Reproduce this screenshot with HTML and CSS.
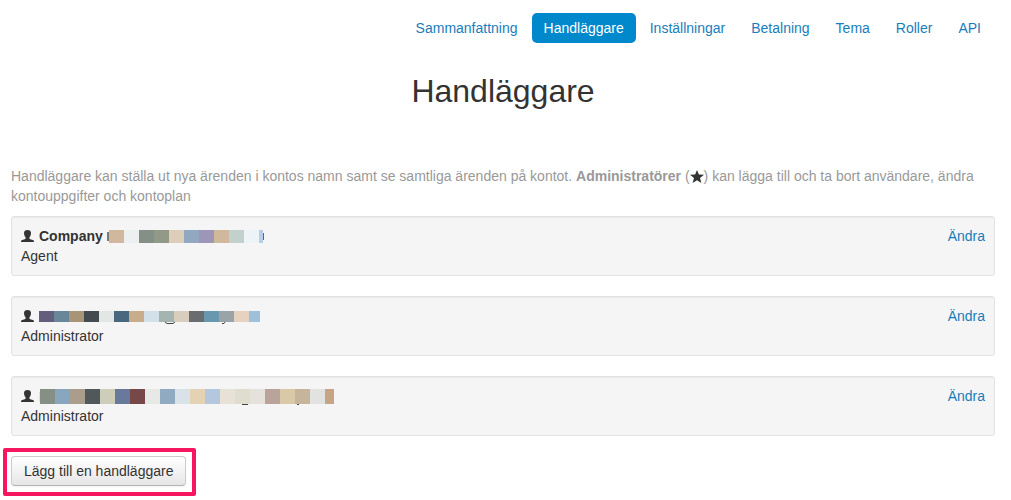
FILE: index.html
```html
<!DOCTYPE html>
<html lang="sv">

<head>
    <meta charset="UTF-8">
    <meta name="viewport" content="width=device-width, initial-scale=1.0">
    <title>Handläggare</title>
    <link rel="stylesheet" href="styles.css">
</head>

<body>
    <svg class="sprite" aria-hidden="true">
        <symbol id="icon-user" viewBox="0 0 13 12">
            <path d="M6.500 0C4.300 0 3 1.100 3 3c0 1.800.7 3.300 1.600 4.200v1c0 .5-.3.800-.8 1L1.200 10.100C.4 10.400 0 10.800 0 12h13c0-1.200-.4-1.600-1.200-1.900L9.200 9.200c-.5-.2-.8-.5-.8-1v-1C9.300 6.300 10 4.800 10 3 10 1.100 8.700 0 6.500 0z"/>
        </symbol>
    </svg>

    <nav>
        <ul class="nav-pills">
            <li><a href="#">Sammanfattning</a></li>
            <li class="active"><a href="#" aria-current="page">Handläggare</a></li>
            <li><a href="#">Inställningar</a></li>
            <li><a href="#">Betalning</a></li>
            <li><a href="#">Tema</a></li>
            <li><a href="#">Roller</a></li>
            <li><a href="#">API</a></li>
        </ul>
    </nav>

    <h1>Handläggare</h1>

    <p class="muted">Handläggare kan ställa ut nya ärenden i kontos namn samt se samtliga ärenden på kontot.
        <strong>Administratörer</strong> (<svg class="icon-star" viewBox="0 0 14 13" role="img" aria-label="stjärna"><path d="M7 0l1.900 4.600 5.100.2-4 3.300L11.400 13 7 10.300 2.600 13 4 8.100 0 4.800l5.100-.2z"/></svg>) kan lägga till och ta bort användare, ändra kontouppgifter och kontoplan</p>

    <div class="well">
        <div class="agent">
            <div class="name">
                <svg class="icon-user" aria-hidden="true"><use href="#icon-user"/></svg>
                <strong>Company</strong>
                <svg class="mask" width="157" height="13" aria-hidden="true">
                    <path fill="#777b80" d="M0 2h2v9H0z"/>
                    <path fill="#d0b89c" d="M2 0h15v13H2z"/>
                    <path fill="#ecf0f1" d="M17 0h15v13H17z"/>
                    <path fill="#848f85" d="M32 0h15v13H32z"/>
                    <path fill="#929986" d="M47 0h15v13H47z"/>
                    <path fill="#ddcdbb" d="M62 0h15v13H62z"/>
                    <path fill="#90a9c1" d="M77 0h15v13H77z"/>
                    <path fill="#9e96b7" d="M92 0h15v13H92z"/>
                    <path fill="#d0b89c" d="M107 0h15v13h-15z"/>
                    <path fill="#c3d1cd" d="M122 0h15v13h-15z"/>
                    <path fill="#eef3f7" d="M137 0h15v13h-15z"/>
                    <path fill="#b6cfe7" d="M152 0h4v13h-4z"/>
                    <path fill="#3472a5" d="M156 3h1v7h-1z"/>
                </svg>
            </div>
            <div>Agent</div>
        </div>
        <a href="#">Ändra</a>
    </div>

    <div class="well">
        <div class="agent">
            <div class="name">
                <svg class="icon-user" aria-hidden="true"><use href="#icon-user"/></svg>
                <svg class="mask" width="221" height="11" aria-hidden="true">
                    <path fill="#635e7e" d="M0 0h15v11H0z"/>
                    <path fill="#6a8799" d="M15 0h15v11H15z"/>
                    <path fill="#a89576" d="M30 0h15v11H30z"/>
                    <path fill="#434b51" d="M45 0h15v11H45z"/>
                    <path fill="#e2e6e5" d="M60 0h15v11H60z"/>
                    <path fill="#4a6780" d="M75 0h15v11H75z"/>
                    <path fill="#c8ac8b" d="M90 0h15v11H90z"/>
                    <path fill="#d2e1e9" d="M105 0h15v11h-15z"/>
                    <path fill="#a3b4b1" d="M120 0h15v11h-15z"/>
                    <path fill="#d9cdbd" d="M135 0h15v11h-15z"/>
                    <path fill="#696d6f" d="M150 0h15v11h-15z"/>
                    <path fill="#6898af" d="M165 0h15v11h-15z"/>
                    <path fill="#9aa3a7" d="M180 0h15v11h-15z"/>
                    <path fill="#e5d3c0" d="M195 0h15v11h-15z"/>
                    <path fill="#9fc0db" d="M210 0h11v11h-11z"/>
                    <path fill="none" stroke="#444" d="M126 11l2 1.500h6l2-1.500M183 12.500h2l1-1.500"/>
                </svg>
            </div>
            <div>Administrator</div>
        </div>
        <a href="#">Ändra</a>
    </div>

    <div class="well">
        <div class="agent">
            <div class="name">
                <svg class="icon-user" aria-hidden="true"><use href="#icon-user"/></svg>
                <svg class="mask" width="295" height="15" aria-hidden="true">
                    <path fill="#f0dfb5" d="M0 3h1v10H0z"/>
                    <path fill="#858f85" d="M1 0h15v15H1z"/>
                    <path fill="#88a7bf" d="M16 0h15v15H16z"/>
                    <path fill="#aa9d8c" d="M31 0h15v15H31z"/>
                    <path fill="#50585b" d="M46 0h15v15H46z"/>
                    <path fill="#cdcdb9" d="M61 0h15v15H61z"/>
                    <path fill="#69799c" d="M76 0h15v15H76z"/>
                    <path fill="#774848" d="M91 0h15v15H91z"/>
                    <path fill="#e6e9e6" d="M106 0h15v15h-15z"/>
                    <path fill="#90abc1" d="M121 0h15v15h-15z"/>
                    <path fill="#d9e2e9" d="M136 0h15v15h-15z"/>
                    <path fill="#e4d3b3" d="M151 0h15v15h-15z"/>
                    <path fill="#b3c8df" d="M166 0h15v15h-15z"/>
                    <path fill="#e8e1d8" d="M181 0h15v15h-15z"/>
                    <path fill="#dfddcf" d="M196 0h15v15h-15z"/>
                    <path fill="#e5e2dc" d="M211 0h15v15h-15z"/>
                    <path fill="#b9a39a" d="M226 0h15v15h-15z"/>
                    <path fill="#d9c9a6" d="M241 0h15v15h-15z"/>
                    <path fill="#c7b59b" d="M256 0h15v15h-15z"/>
                    <path fill="#e2e2e1" d="M271 0h15v15h-15z"/>
                    <path fill="#c6a586" d="M286 0h9v15h-9z"/>
                    <path fill="#444" d="M203 15h6v1h-6zM258 15h2v1h-2z"/>
                </svg>
            </div>
            <div>Administrator</div>
        </div>
        <a href="#">Ändra</a>
    </div>

    <div class="highlight">
        <button type="button" class="btn">Lägg till en handläggare</button>
    </div>
</body>

</html>
```
FILE: styles.css
```css
body {
    font-family: "Liberation Sans", Arial, sans-serif;
    font-size: 14px;
    line-height: 20px;
    color: #333;
    background: #fff;
    margin: 0;
    padding: 13px 16px 4px 11px;
}

a {
    color: #1a7dbb;
    text-decoration: none;
}

a:hover {
    text-decoration: underline;
}

.sprite {
    display: none;
}

.nav-pills {
    display: flex;
    justify-content: flex-end;
    gap: 2px;
    list-style: none;
    margin: 0;
    padding: 0 2px 0 0;
}

.nav-pills a {
    display: block;
    padding: 8px 12px;
    line-height: 14px;
    border-radius: 5px;
}

.nav-pills .active a {
    color: #fff;
    background: #0088cc;
}

h1 {
    font-size: 32px;
    line-height: 40px;
    font-weight: normal;
    text-align: center;
    margin: 28px 0 55px;
}

.muted {
    color: #999;
    margin: 0 0 10px;
}

.icon-star {
    width: 14px;
    height: 13px;
    fill: #333;
    vertical-align: -2px;
}

.well {
    display: flex;
    justify-content: space-between;
    padding: 9px;
    margin-bottom: 20px;
    background: #f5f5f5;
    border: 1px solid #e3e3e3;
    border-radius: 3px;
    box-shadow: inset 0 1px 1px rgba(0, 0, 0, 0.05);
}

.name {
    display: flex;
    align-items: center;
    gap: 5px;
    height: 20px;
}

.name strong {
    margin-right: -1px;
}

.icon-user {
    width: 13px;
    height: 12px;
    fill: #333;
}

.mask {
    overflow: visible;
}

/* the negative margin keeps the button in line with the wells */
.highlight {
    width: fit-content;
    margin: -8px 0 0 -8px;
    padding: 4px 6px 6px 4px;
    border: 4px solid #f5165f;
    border-radius: 2px;
}

.btn {
    display: block;
    padding: 4px 12px;
    font: inherit;
    color: #333;
    background: linear-gradient(to bottom, #fff, #e6e6e6);
    border: 1px solid #ccc;
    border-bottom-color: #b3b3b3;
    border-radius: 4px;
    box-shadow: inset 0 1px 0 rgba(255, 255, 255, 0.2), 0 1px 2px rgba(0, 0, 0, 0.05);
    cursor: pointer;
}
```
